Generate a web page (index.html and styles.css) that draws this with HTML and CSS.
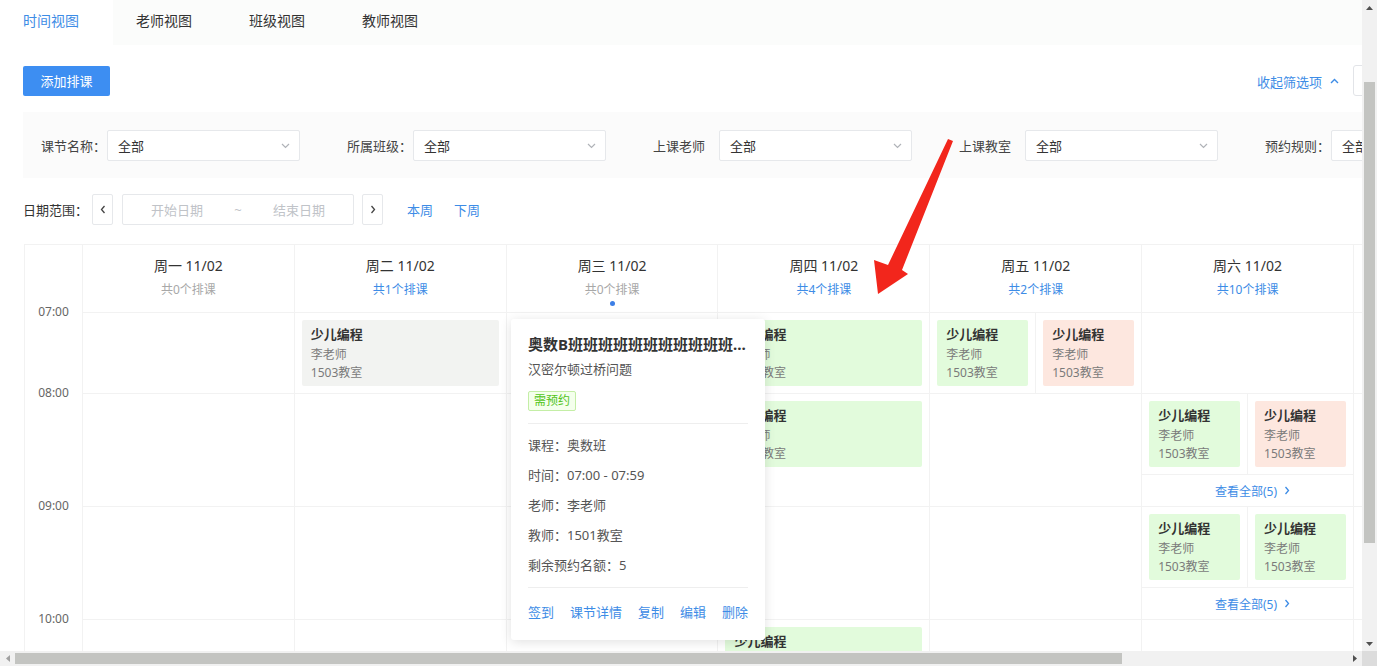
FILE: index.html
```html
<!DOCTYPE html>
<html lang="zh-CN">
<head>
  <meta charset="UTF-8" />
  <title>排课管理</title>
  <meta name="viewport" content="width=device-width, initial-scale=1.0"/>
  <link rel="stylesheet" href="styles.css">
</head>
<body>
<div class="screen">
  <div class="viewport">
    <div class="page">

      <!-- TABS -->
      <div class="tabs">
        <div class="tab active">时间视图</div>
        <div class="tab">老师视图</div>
        <div class="tab">班级视图</div>
        <div class="tab">教师视图</div>
      </div>

      <!-- TOOLBAR -->
      <div class="toolbar">
        <button class="btn-primary">添加排课</button>
        <div class="toolbar-right">
          <span class="collapse">收起筛选项
            <svg width="9" height="6" viewBox="0 0 9 6"><polyline points="1,5 4.5,1.5 8,5" fill="none" stroke="#3d8ce6" stroke-width="1.4"/></svg>
          </span>
          <div class="mode-switch"></div>
        </div>
      </div>

      <!-- FILTERS -->
      <div class="filters">
        <div class="filter">
          <label>课节名称：</label>
          <div class="select"><span>全部</span><svg width="9" height="6" viewBox="0 0 9 6"><polyline points="1,1 4.5,4.5 8,1" fill="none" stroke="#b0b3b8" stroke-width="1.2"/></svg></div>
        </div>
        <div class="filter">
          <label>所属班级：</label>
          <div class="select"><span>全部</span><svg width="9" height="6" viewBox="0 0 9 6"><polyline points="1,1 4.5,4.5 8,1" fill="none" stroke="#b0b3b8" stroke-width="1.2"/></svg></div>
        </div>
        <div class="filter">
          <label>上课老师</label>
          <div class="select"><span>全部</span><svg width="9" height="6" viewBox="0 0 9 6"><polyline points="1,1 4.5,4.5 8,1" fill="none" stroke="#b0b3b8" stroke-width="1.2"/></svg></div>
        </div>
        <div class="filter">
          <label>上课教室</label>
          <div class="select"><span>全部</span><svg width="9" height="6" viewBox="0 0 9 6"><polyline points="1,1 4.5,4.5 8,1" fill="none" stroke="#b0b3b8" stroke-width="1.2"/></svg></div>
        </div>
        <div class="filter">
          <label>预约规则：</label>
          <div class="select"><span>全部</span><svg width="9" height="6" viewBox="0 0 9 6"><polyline points="1,1 4.5,4.5 8,1" fill="none" stroke="#b0b3b8" stroke-width="1.2"/></svg></div>
        </div>
      </div>

      <!-- DATE RANGE -->
      <div class="range">
        <span class="range-label">日期范围：</span>
        <button class="nav-btn"><svg width="6" height="9" viewBox="0 0 6 9"><polyline points="4.5,1 1.5,4.5 4.5,8" fill="none" stroke="#444" stroke-width="1.3"/></svg></button>
        <div class="range-input">
          <span class="ph">开始日期</span>
          <span class="sep">~</span>
          <span class="ph">结束日期</span>
        </div>
        <button class="nav-btn"><svg width="6" height="9" viewBox="0 0 6 9"><polyline points="1.5,1 4.5,4.5 1.5,8" fill="none" stroke="#444" stroke-width="1.3"/></svg></button>
        <a class="week-link first">本周</a>
        <a class="week-link">下周</a>
      </div>

      <!-- CALENDAR -->
      <div class="calendar">
        <div class="grid">
          <!-- header -->
          <div class="head time-col"></div>
          <div class="head"><div class="day">周一 11/02</div><div class="count">共0个排课</div></div>
          <div class="head"><div class="day">周二 11/02</div><div class="count has">共1个排课</div></div>
          <div class="head"><div class="day">周三 11/02</div><div class="count">共0个排课</div><div class="dot"></div></div>
          <div class="head"><div class="day">周四 11/02</div><div class="count has">共4个排课</div></div>
          <div class="head"><div class="day">周五 11/02</div><div class="count has">共2个排课</div></div>
          <div class="head"><div class="day">周六 11/02</div><div class="count has">共10个排课</div></div>
          <div class="head"><div class="day">周日 11/02</div><div class="count">共0个排课</div></div>

          <!-- 07:00 -->
          <div class="time"><span>07:00</span></div>
          <div class="cell"></div>
          <div class="cell pad">
            <div class="card grey"><b>少儿编程</b><span>李老师</span><span>1503教室</span></div>
          </div>
          <div class="cell"></div>
          <div class="cell pad">
            <div class="card green"><b>少儿编程</b><span>李老师</span><span>1503教室</span></div>
          </div>
          <div class="cell split">
            <div class="half"><div class="card green"><b>少儿编程</b><span>李老师</span><span>1503教室</span></div></div>
            <div class="half"><div class="card pink"><b>少儿编程</b><span>李老师</span><span>1503教室</span></div></div>
          </div>
          <div class="cell"></div>
          <div class="cell"></div>

          <!-- 08:00 -->
          <div class="time"><span>08:00</span></div>
          <div class="cell"></div>
          <div class="cell"></div>
          <div class="cell"></div>
          <div class="cell pad">
            <div class="card green"><b>少儿编程</b><span>李老师</span><span>1503教室</span></div>
          </div>
          <div class="cell"></div>
          <div class="cell">
            <div class="split">
              <div class="half"><div class="card green"><b>少儿编程</b><span>李老师</span><span>1503教室</span></div></div>
              <div class="half"><div class="card pink"><b>少儿编程</b><span>李老师</span><span>1503教室</span></div></div>
            </div>
            <div class="more">查看全部(5)
              <svg width="6" height="9" viewBox="0 0 6 9"><polyline points="1.5,1 4.5,4.5 1.5,8" fill="none" stroke="#3d8ce6" stroke-width="1.3"/></svg>
            </div>
          </div>
          <div class="cell"></div>

          <!-- 09:00 -->
          <div class="time"><span>09:00</span></div>
          <div class="cell"></div>
          <div class="cell"></div>
          <div class="cell"></div>
          <div class="cell"></div>
          <div class="cell"></div>
          <div class="cell">
            <div class="split">
              <div class="half"><div class="card green"><b>少儿编程</b><span>李老师</span><span>1503教室</span></div></div>
              <div class="half"><div class="card green"><b>少儿编程</b><span>李老师</span><span>1503教室</span></div></div>
            </div>
            <div class="more">查看全部(5)
              <svg width="6" height="9" viewBox="0 0 6 9"><polyline points="1.5,1 4.5,4.5 1.5,8" fill="none" stroke="#3d8ce6" stroke-width="1.3"/></svg>
            </div>
          </div>
          <div class="cell"></div>

          <!-- 10:00 -->
          <div class="time"><span>10:00</span></div>
          <div class="cell"></div>
          <div class="cell"></div>
          <div class="cell"></div>
          <div class="cell pad">
            <div class="card green"><b>少儿编程</b><span>李老师</span><span>1503教室</span></div>
          </div>
          <div class="cell"></div>
          <div class="cell"></div>
          <div class="cell"></div>
        </div>

        <!-- lesson popover -->
        <div class="popover">
          <div class="pop-title">奥数B班班班班班班班班班班班班班班</div>
          <div class="pop-sub">汉密尔顿过桥问题</div>
          <span class="tag">需预约</span>
          <div class="pop-line"></div>
          <div class="pop-row">课程：奥数班</div>
          <div class="pop-row">时间：07:00 - 07:59</div>
          <div class="pop-row">老师：李老师</div>
          <div class="pop-row">教师：1501教室</div>
          <div class="pop-row">剩余预约名额：5</div>
          <div class="pop-line last"></div>
          <div class="pop-actions">
            <a>签到</a><a>课节详情</a><a>复制</a><a>编辑</a><a>删除</a>
          </div>
        </div>
      </div>

      <!-- red arrow annotation -->
      <svg class="annotation" width="90" height="165" viewBox="0 0 90 165">
        <polygon points="80,5 85,7 34,136 40,140 10,160 6,126 20,131" fill="#f2261c"/>
      </svg>
    </div>
  </div>

  <!-- scrollbars -->
  <div class="vscroll">
    <div class="sb-arrow"><svg width="7" height="4" viewBox="0 0 7 4"><polygon points="0,4 3.5,0 7,4" fill="#505050"/></svg></div>
    <div class="vtrack"><div class="vthumb"></div></div>
    <div class="sb-arrow"><svg width="7" height="4" viewBox="0 0 7 4"><polygon points="0,0 3.5,4 7,0" fill="#505050"/></svg></div>
  </div>
  <div class="hscroll">
    <div class="sb-arrow"><svg width="4" height="7" viewBox="0 0 4 7"><polygon points="4,0 0,3.5 4,7" fill="#a0a0a0"/></svg></div>
    <div class="htrack"><div class="hthumb"></div></div>
    <div class="sb-arrow"><svg width="4" height="7" viewBox="0 0 4 7"><polygon points="0,0 4,3.5 0,7" fill="#505050"/></svg></div>
  </div>
  <div class="corner"></div>
</div>
</body>
</html>
```

FILE: styles.css
```css
* {
  box-sizing: border-box;
}

body {
  margin: 0;
  font-family: "Noto Sans", "Noto Sans CJK SC", sans-serif;
  color: #333;
  background: #fff;
  overflow: hidden;
}

.screen {
  display: grid;
  grid-template-columns: 1362px 15px;
  grid-template-rows: 651px 15px;
  width: 1377px;
  height: 666px;
}

.viewport {
  overflow: hidden;
}

.page {
  position: relative;
  width: 1657px;
  padding: 0 23px 0 23px;
}

/* tabs */
.tabs {
  display: flex;
  height: 45px;
  margin: 0 -23px;
  background: #fbfcfb;
}

.tab {
  width: 113px;
  padding-left: 23px;
  font-size: 14px;
  line-height: 42px;
  color: #333;
}

.tab.active {
  background: #fff;
  color: #3d8ce6;
}

/* toolbar */
.toolbar {
  display: flex;
  align-items: center;
  margin-top: 20px;
}

.btn-primary {
  width: 87px;
  height: 30px;
  border: none;
  border-radius: 2px;
  background: #3d8ef2;
  color: #fff;
  font-family: inherit;
  font-size: 13px;
  padding: 0;
}

.toolbar-right {
  display: flex;
  align-items: center;
  margin-left: auto;
}

.collapse {
  display: flex;
  align-items: center;
  gap: 8px;
  font-size: 13px;
  color: #3d8ce6;
  margin-top: 1px;
}

.mode-switch {
  width: 281px;
  height: 31px;
  margin-left: 14px;
  border: 1px solid #e2e4e8;
  border-radius: 3px;
  background: #fff;
}

/* filters */
.filters {
  display: flex;
  gap: 47px;
  margin-top: 16px;
  padding: 18px 0 17px 18px;
  background: #fbfbfb;
}

.filter {
  display: flex;
  align-items: center;
  flex-shrink: 0;
}

.filter label {
  width: 66px;
  font-size: 13px;
  color: #444;
}

.select {
  display: flex;
  align-items: center;
  justify-content: space-between;
  width: 193px;
  height: 31px;
  padding: 0 9px 0 10px;
  border: 1px solid #e6e8eb;
  border-radius: 2px;
  background: #fff;
  font-size: 13px;
  color: #333;
}

/* date range */
.range {
  display: flex;
  align-items: center;
  height: 31px;
  margin-top: 16px;
}

.range-label {
  font-size: 13px;
  color: #333;
  width: 69px;
}

.nav-btn {
  display: flex;
  align-items: center;
  justify-content: center;
  width: 21px;
  height: 31px;
  padding: 0;
  border: 1px solid #e6e8eb;
  border-radius: 2px;
  background: #fff;
}

.range-input {
  display: flex;
  align-items: center;
  width: 232px;
  height: 31px;
  margin: 0 8px 0 9px;
  border: 1px solid #e6e8eb;
  border-radius: 2px;
  font-size: 13px;
  color: #c0c3c8;
}

.range-input .ph {
  flex: 1;
  text-align: center;
}

.range-input .sep {
  width: 14px;
  text-align: center;
}

.week-link {
  font-size: 13px;
  color: #3d8ce6;
  margin-left: 21px;
}

.week-link.first {
  margin-left: 24px;
}

/* calendar */
.calendar {
  position: relative;
  margin-top: 19px;
  margin-left: 1px;
}

.grid {
  display: grid;
  grid-template-columns: 58px repeat(7, 211.83px);
  border-top: 1px solid #f2f2f2;
  border-left: 1px solid #f2f2f2;
}

.head {
  height: 68px;
  padding-top: 11px;
  text-align: center;
  border-right: 1px solid #f2f2f2;
  border-bottom: 1px solid #f2f2f2;
}

.head.time-col {
  border-bottom: none;
}

.day {
  font-size: 14px;
  line-height: 20px;
  color: #333;
}

.count {
  margin-top: 5px;
  font-size: 12px;
  line-height: 18px;
  color: #a8a8a8;
}

.count.has {
  color: #3d8ce6;
}

.dot {
  width: 5px;
  height: 5px;
  margin: 2px auto 0;
  border-radius: 50%;
  background: #3d7fe6;
}

.time {
  border-right: 1px solid #f2f2f2;
}

.time span {
  display: block;
  margin-top: -9px;
  font-size: 12px;
  line-height: 16px;
  text-align: center;
  color: #666;
}

.cell {
  min-height: 81px;
  border-right: 1px solid #f2f2f2;
  border-bottom: 1px solid #f2f2f2;
}

.cell.pad {
  padding: 7px;
}

.split {
  display: flex;
}

.half {
  flex: 1;
  padding: 7px;
}

.half + .half {
  border-left: 1px solid #f2f2f2;
}

.card {
  display: flex;
  flex-direction: column;
  height: 66px;
  padding: 5px 9px 6px;
  border-radius: 2px;
  overflow: hidden;
  white-space: nowrap;
}

.card b {
  font-size: 13px;
  line-height: 18px;
  margin-bottom: 3px;
  color: #333;
}

.card span {
  font-size: 12px;
  line-height: 18px;
  color: #7a7a7a;
}

.card.grey {
  background: #f2f3f1;
}

.card.green {
  background: #e2fbdc;
}

.card.pink {
  background: #fde7df;
}

.more {
  display: flex;
  align-items: center;
  justify-content: center;
  gap: 7px;
  height: 32px;
  padding-left: 10px;
  border-top: 1px solid #f2f2f2;
  font-size: 12px;
  color: #3d8ce6;
}

/* popover */
.popover {
  position: absolute;
  left: 487px;
  top: 75px;
  width: 254px;
  height: 321px;
  padding: 14px 17px 0;
  background: #fff;
  border-radius: 3px;
  box-shadow: 0 2px 12px rgba(0, 0, 0, 0.12);
  z-index: 2;
}

.pop-title {
  font-size: 15px;
  font-weight: bold;
  line-height: 22px;
  color: #333;
  white-space: nowrap;
  overflow: hidden;
  text-overflow: ellipsis;
}

.pop-sub {
  margin-top: 4px;
  font-size: 13px;
  line-height: 20px;
  color: #555;
}

.tag {
  display: inline-block;
  margin-top: 12px;
  padding: 0 5px;
  height: 20px;
  font-size: 12px;
  line-height: 18px;
  color: #52c41a;
  background: #f4ffec;
  border: 1px solid #c4eea6;
  border-radius: 2px;
}

.pop-line {
  height: 1px;
  margin-top: 12px;
  margin-bottom: 6px;
  background: #eeeeee;
}

.pop-line.last {
  margin-top: 7px;
  margin-bottom: 14px;
}

.pop-row {
  font-size: 13px;
  line-height: 30px;
  color: #555;
}

.pop-actions {
  display: flex;
  justify-content: space-between;
  font-size: 13px;
  line-height: 20px;
  color: #3d8ce6;
}

/* annotation */
.annotation {
  position: absolute;
  left: 868px;
  top: 134px;
  z-index: 3;
}

/* scrollbars */
.vscroll {
  display: flex;
  flex-direction: column;
  background: #f1f1f1;
}

.hscroll {
  display: flex;
  background: #f1f1f1;
}

.sb-arrow {
  display: flex;
  align-items: center;
  justify-content: center;
  width: 15px;
  height: 15px;
  flex-shrink: 0;
}

.vtrack {
  flex: 1;
  padding: 67px 2px 0;
}

.vthumb {
  height: 461px;
  background: #c3c4c1;
}

.htrack {
  flex: 1;
  padding: 2px 0;
}

.hthumb {
  width: 1107px;
  height: 11px;
  background: #c3c4c1;
}

.corner {
  background: #dcdcdc;
}
```
